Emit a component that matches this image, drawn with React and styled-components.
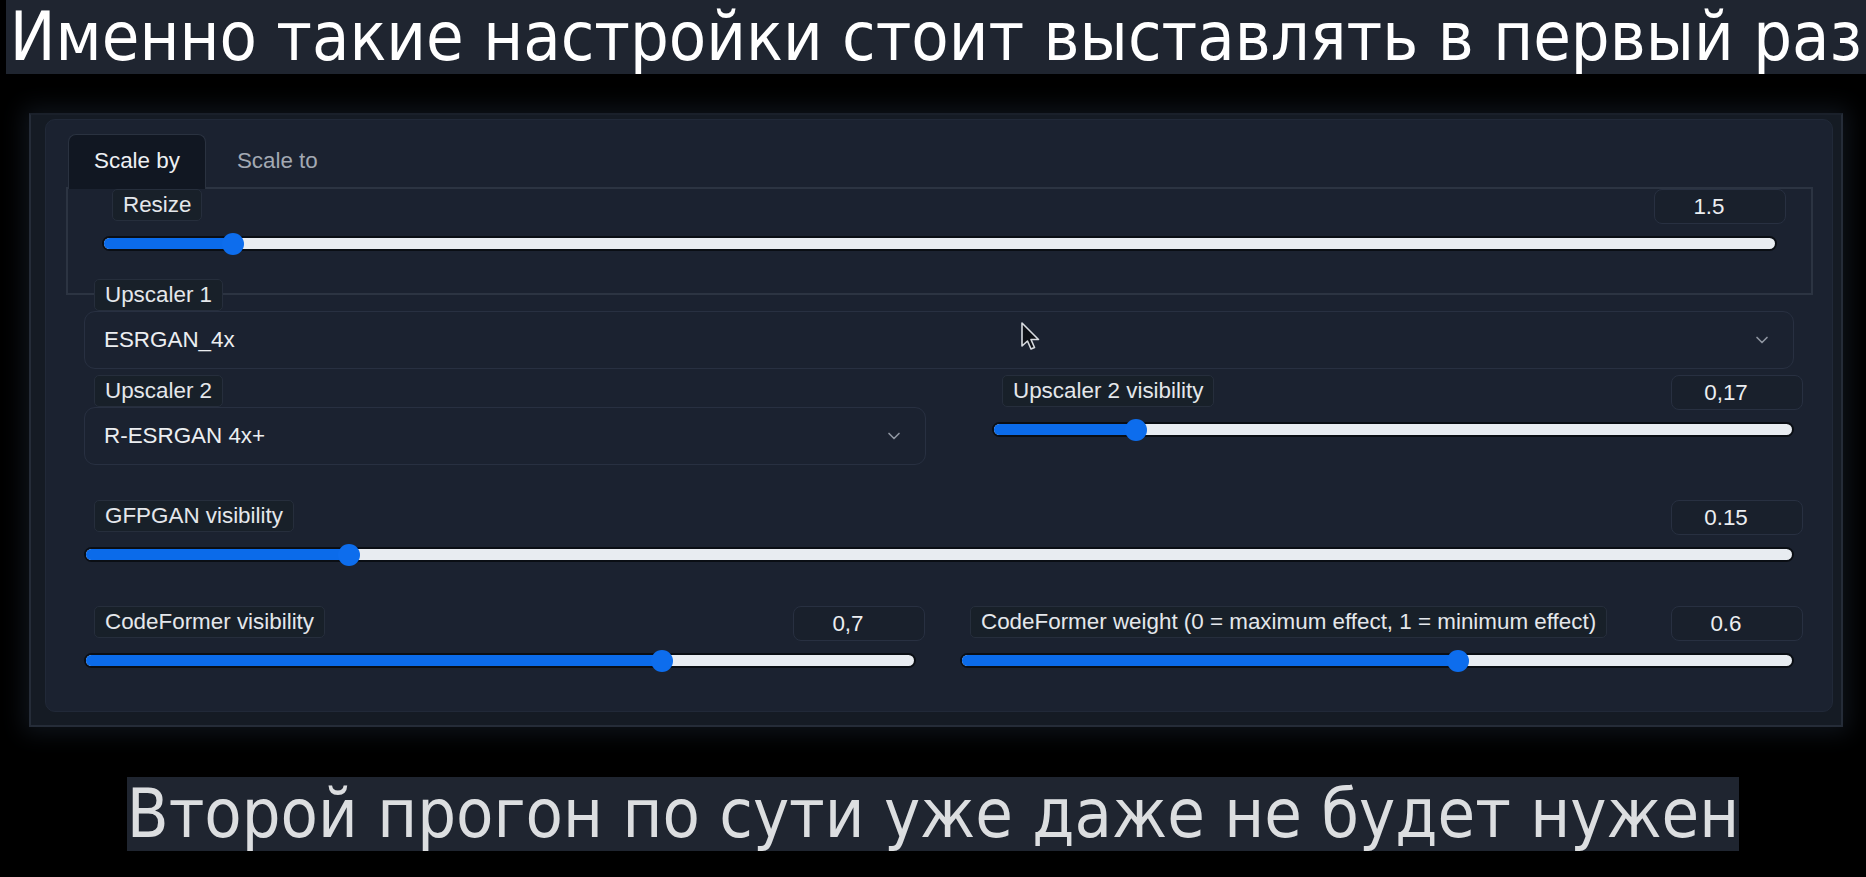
import React from 'react';
import styled, { createGlobalStyle } from 'styled-components';
import { ChevronDown } from 'lucide-react';

const GlobalStyle = createGlobalStyle`
  html, body {
    margin: 0;
    padding: 0;
    background: #000;
  }
  body {
    width: 1866px;
    height: 877px;
    overflow: hidden;
  }
`;

const Page = styled.div`
  position: relative;
  width: 1866px;
  height: 877px;
  background: #000;
  display: flex;
  flex-direction: column;
  align-items: flex-start;
  font-family: 'Liberation Sans', Arial, sans-serif;
`;

const Caption = styled.div`
  align-self: ${(props) => (props.wide ? 'stretch' : 'center')};
  margin-left: ${(props) => (props.wide ? '6px' : '0')};
  height: 74px;
  background: #1f2530;
  color: ${(props) => (props.wide ? '#ffffff' : '#dcdee0')};
  font-family: 'DejaVu Sans Condensed', 'DejaVu Sans', sans-serif;
  font-stretch: condensed;
  font-size: 68px;
  line-height: 74px;
  white-space: nowrap;
  text-align: center;
`;

const Frame = styled.div`
  margin: 39px 0 50px 29px;
  width: 1814px;
  height: 614px;
  box-sizing: border-box;
  background: #151b24;
  border: 2px solid #252c38;
  border-top-color: #1a202a;
  box-shadow: 0 0 22px 6px rgba(18, 23, 32, 0.85);
  padding: 4px 10px 13px 14px;
  display: flex;
`;

const Panel = styled.div`
  flex: 1;
  box-sizing: border-box;
  background: #1b2230;
  border: 1px solid #212938;
  border-radius: 10px;
  padding: 14px 19px 0 20px;
  display: flex;
  flex-direction: column;
  color: #e4e7eb;
  font-size: 22.4px;
`;

const TabRow = styled.div`
  display: flex;
  align-items: flex-end;
  padding-left: 2px;
  position: relative;
  z-index: 1;
`;

const Tab = styled.div`
  height: 55px;
  box-sizing: border-box;
  padding: 0 25px 2px;
  margin-left: ${(props) => (props.active ? '0' : '5px')};
  display: flex;
  align-items: center;
  border-radius: 8px 8px 0 0;
  margin-bottom: -2px;
  background: ${(props) => (props.active ? '#111722' : 'transparent')};
  border: 1px solid ${(props) => (props.active ? '#2a3240' : 'transparent')};
  border-bottom: none;
  color: ${(props) => (props.active ? '#eef0f3' : '#a3a9b3')};
`;

const TabBox = styled.div`
  height: 108px;
  box-sizing: border-box;
  border: 2px solid #2c3442;
  padding: 0 25px 0 34px;
`;

const Fields = styled.div`
  margin-top: -16px;
  padding: 0 10px 0 18px;
  display: flex;
  flex-direction: column;
  position: relative;
`;

const Row = styled.div`
  display: grid;
  grid-template-columns: ${(props) => props.columns || '1fr'};
  column-gap: ${(props) => props.gap || 0}px;
  margin-top: ${(props) => props.top || 0}px;
  align-items: start;
`;

const Chip = styled.div`
  align-self: flex-start;
  margin-left: 10px;
  height: 32px;
  box-sizing: border-box;
  padding: 0 10px;
  line-height: 30px;
  background: #182029;
  border: 1px solid #262e3c;
  border-radius: 5px;
  white-space: nowrap;
`;

const DropBlock = styled.div`
  display: flex;
  flex-direction: column;
  margin-right: ${(props) => props.inset || 0}px;
`;

const Select = styled.div`
  height: 58px;
  box-sizing: border-box;
  border: 1px solid #283041;
  border-radius: 11px;
  background: #1b2230;
  padding: 0 21px 0 19px;
  display: flex;
  align-items: center;
  justify-content: space-between;
  color: #eceef1;
`;

const SliderBlock = styled.div`
  display: flex;
  flex-direction: column;
`;

const SliderHead = styled.div`
  height: 36px;
  display: flex;
  justify-content: space-between;
  align-items: flex-start;
`;

const NumberBox = styled.div`
  width: 132px;
  height: 35px;
  box-sizing: border-box;
  border: 1px solid #283041;
  border-radius: 8px;
  background: #19202c;
  padding-right: 22px;
  display: flex;
  align-items: center;
  justify-content: center;
  color: #eceef1;
`;

const Track = styled.div`
  position: relative;
  margin: 11px 9px 0 0;
  height: 15px;
  box-sizing: border-box;
  border: 2px solid #0a0e14;
  border-radius: 8px;
  background: #e8ecf1;
`;

const Fill = styled.div`
  height: 100%;
  border-radius: 6px 0 0 6px;
  background: #0b6bea;
`;

const Thumb = styled.div`
  position: absolute;
  top: 50%;
  width: 22px;
  height: 22px;
  margin: -11px 0 0 -11px;
  border-radius: 50%;
  background: #0d6ded;
`;

const Cursor = styled.svg`
  position: absolute;
  left: 1020px;
  top: 321px;
`;

const Slider = ({ label, value, pct }) => (
  <SliderBlock>
    <SliderHead>
      <Chip>{label}</Chip>
      <NumberBox>{value}</NumberBox>
    </SliderHead>
    <Track>
      <Fill style={{ width: `${pct}%` }} />
      <Thumb style={{ left: `${pct}%` }} />
    </Track>
  </SliderBlock>
);

const Dropdown = ({ label, value, inset }) => (
  <DropBlock inset={inset}>
    <Chip>{label}</Chip>
    <Select>
      <span>{value}</span>
      <ChevronDown size={20} color="#8f96a1" strokeWidth={2} />
    </Select>
  </DropBlock>
);

export default function App() {
  return (
    <Page>
      <GlobalStyle />
      <Caption wide>Именно такие настройки стоит выставлять в первый раз</Caption>
      <Frame>
        <Panel>
          <TabRow>
            <Tab active>Scale by</Tab>
            <Tab>Scale to</Tab>
          </TabRow>
          <TabBox>
            <Slider label="Resize" value="1.5" pct={7.7} />
          </TabBox>
          <Fields>
            <Dropdown label="Upscaler 1" value="ESRGAN_4x" inset={9} />
            <Row columns="842px 811px" gap={66} top={6}>
              <Dropdown label="Upscaler 2" value="R-ESRGAN 4x+" />
              <Slider label="Upscaler 2 visibility" value="0,17" pct={17.8} />
            </Row>
            <Row top={35}>
              <Slider label="GFPGAN visibility" value="0.15" pct={15.4} />
            </Row>
            <Row columns="841px 843px" gap={35} top={44}>
              <Slider label="CodeFormer visibility" value="0,7" pct={69.6} />
              <Slider
                label="CodeFormer weight (0 = maximum effect, 1 = minimum effect)"
                value="0.6"
                pct={59.8}
              />
            </Row>
          </Fields>
        </Panel>
      </Frame>
      <Caption>Второй прогон по сути уже даже не будет нужен</Caption>
      <Cursor width="22" height="30" viewBox="0 0 22 30">
        <path
          d="M2 2 L2 25 L7.5 20 L11 28 L14.5 26.5 L11 18.5 L18.5 18.5 Z"
          fill="#0d1016"
          stroke="#d8dbe0"
          strokeWidth="1.6"
          strokeLinejoin="round"
        />
      </Cursor>
    </Page>
  );
}
